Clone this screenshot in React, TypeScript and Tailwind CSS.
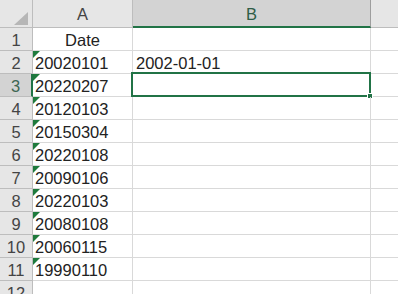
import React from "react";

const dataA = [
  "20020101",
  "20220207",
  "20120103",
  "20150304",
  "20220108",
  "20090106",
  "20220103",
  "20080108",
  "20060115",
  "19990110",
];

function Tri() {
  return (
    <svg className="absolute left-0 top-0" width="7" height="7" viewBox="0 0 7 7">
      <polygon points="0,0 7,0 0,7" fill="#1e7a3c" />
    </svg>
  );
}

export default function App() {
  const rows = Array.from({ length: 12 }, (_, i) => i + 1);
  return (
    <div
      className="w-[398px] h-[294px] overflow-hidden bg-white text-[16.5px] text-[#222]"
      style={{ fontFamily: '"Liberation Sans", "Noto Sans CJK SC", sans-serif' }}
    >
      <div className="grid grid-cols-[33px_100px_238px_1fr]">
        {/* header row */}
        <div className="h-[28px] bg-[#e6e6e6] border-r border-b border-[#bdbdbd] relative">
          <svg className="absolute left-[14px] top-[12px]" width="14" height="13" viewBox="0 0 14 13">
            <polygon points="14,0 14,13 0,13" fill="#b6b6b6" />
          </svg>
        </div>
        <div className="h-[28px] bg-[#e6e6e6] border-r border-b border-[#bdbdbd] flex items-center justify-center text-[#444] pt-[1px]">
          A
        </div>
        <div className="h-[28px] bg-[#d3d3d3] border-r border-[#9e9e9e] border-b-2 border-b-[#217346] flex items-center justify-center text-[#2f5d47] pt-[2px]">
          B
        </div>
        <div className="h-[28px] bg-[#e6e6e6] border-b border-[#bdbdbd]" />

        {rows.map((r) => {
          const sel = r === 3;
          const a = r === 1 ? "Date" : dataA[r - 2];
          return (
            <React.Fragment key={r}>
              <div
                className={
                  sel
                    ? "h-[23px] bg-[#d3d3d3] border-b border-[#bdbdbd] border-r-2 border-r-[#217346] flex items-center justify-center text-[#3d6652] pt-[2px]"
                    : "h-[23px] bg-[#e6e6e6] border-r border-b border-[#bdbdbd] flex items-center justify-center text-[#444] pt-[2px]"
                }
              >
                {r}
              </div>
              <div
                className={
                  "h-[23px] border-r border-b border-[#d9d9d9] relative flex items-center pt-[2px] " +
                  (r === 1 ? "justify-center" : "pl-[2px]")
                }
              >
                {r >= 2 && r <= 11 && <Tri />}
                {r <= 11 ? a : ""}
              </div>
              <div className="h-[23px] border-r border-b border-[#d9d9d9] relative flex items-center pl-[3px] pt-[2px]">
                {r === 2 ? "2002-01-01" : ""}
                {sel && (
                  <div className="absolute left-[-2px] top-[-2px] right-[-1px] bottom-[-1px] border-2 border-[#217346]">
                    <div className="absolute right-[-4px] bottom-[-4px] w-[6px] h-[6px] bg-[#217346] border border-white" />
                  </div>
                )}
              </div>
              <div className="h-[23px] border-b border-[#d9d9d9]" />
            </React.Fragment>
          );
        })}
      </div>
    </div>
  );
}
